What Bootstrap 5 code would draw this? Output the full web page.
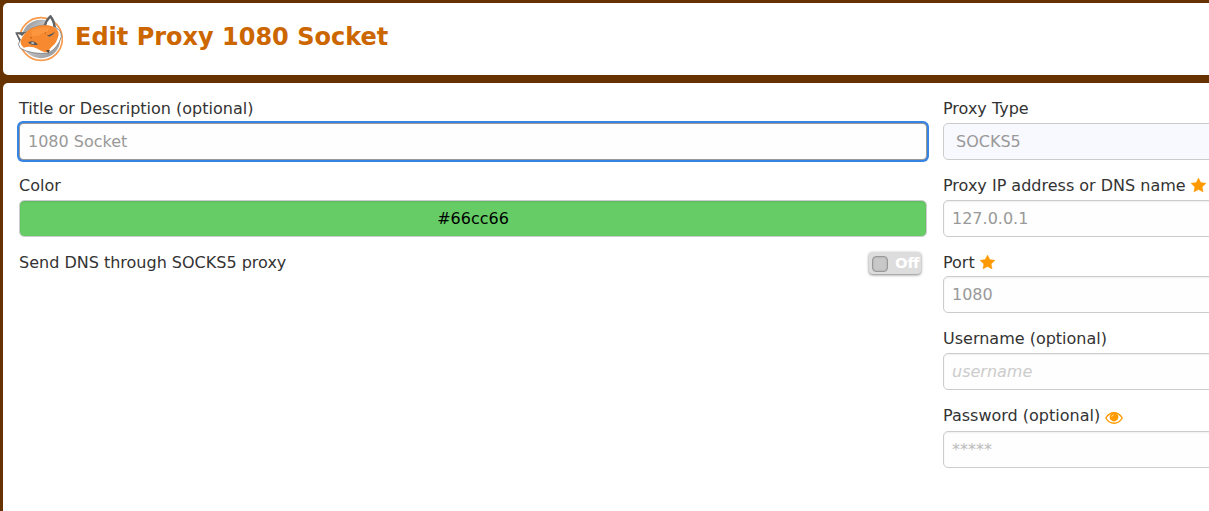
<!DOCTYPE html>
<html lang="en">
<head>
<meta charset="utf-8">
<title>Edit Proxy 1080 Socket</title>
<link href="https://cdn.jsdelivr.net/npm/bootstrap@5.3.0/dist/css/bootstrap.min.css" rel="stylesheet">
<style>
html, body { height: 100%; overflow: hidden; }
body { background: #630; color: #333; font-family: "DejaVu Sans", sans-serif; font-size: 16px; line-height: 24px; }
.page { width: 1854px; height: 100vh; padding: 3px 3px 0; gap: 8px; }
.panel { background: #fff; border-radius: 5px; }
.head-panel { height: 72px; padding: 11px 12px 13px; gap: 12px; }
.head-panel h1 { color: #c60; font-size: 24px; line-height: 28px; margin-top: -2px; }
.body-panel { border-radius: 5px 5px 0 0; padding: 14px 16px 0; gap: 16px; }
.side { width: 908px; flex: none; }
.field { height: 77px; }
.field label { display: flex; align-items: center; height: 24px; margin-bottom: 2px; gap: 5px; }
.star { margin-top: -2px; }
.eye { margin-top: 3px; }
.host-field, .port-field { height: 76.5px; }
.field .port-label { margin-bottom: 1.4px; }
.field .pass-label { margin-bottom: 3px; }
.form-control, .form-select { height: 37px; padding: 0 8px; font-size: 16px; line-height: 35px; color: #999; background-color: #fefefe; border: 1px solid #ccc; border-radius: 5px; box-shadow: inset 0 1px 2px #eee; }
.form-control::placeholder { color: #ccc; }
.form-control.secret::placeholder { color: #bbb; }
.form-control.active-field { border-color: #999; box-shadow: 0 0 0 2px #3584e4; border-radius: 4px; }
.form-select { background: #f8f8ff; padding-left: 12px; box-shadow: none; }
.form-control.color-box { background: #6c6; background-clip: padding-box; color: #000; text-align: center; box-shadow: inset 0 1px 2px rgba(0,0,0,.1); }
.dns-row { height: 24px; padding-right: 6px; }
.toggle { width: 52px; height: 22px; margin-top: 1px; background: #ddd; border-radius: 4px; box-shadow: 0 1px 3px rgba(0,0,0,.5); padding-left: 3px; gap: 7px; color: #fff; font-size: 14.8px; line-height: 22px; overflow: hidden; white-space: nowrap; }
.knob { width: 16px; height: 16px; flex: none; background: #c8c8c8; border: 1px solid #999; border-radius: 4px; box-shadow: inset 0 0 2px #999; margin-top: 1px; }
</style>
</head>
<body>
<div class="page d-flex flex-column">
  <header class="panel head-panel d-flex align-items-center">
    <svg width="48" height="48" viewBox="6 6 144 144" class="flex-shrink-0">
      <defs>
        <linearGradient id="disc" x1="0" y1="0" x2="1" y2="1"><stop offset="0" stop-color="#85878a"/><stop offset=".4" stop-color="#cbccce"/><stop offset="1" stop-color="#8d8f92"/></linearGradient>
      </defs>
      <circle cx="84" cy="81" r="64" fill="#fff" stroke="#f99a4c" stroke-width="5"/>
      <circle cx="84" cy="81" r="58" fill="url(#disc)"/>
      <!-- head and cheeks -->
      <path d="M8 62L39 61Q58 43 93 39Q100 18 113 9Q126 24 128 47Q146 56 145 74Q136 106 107 123Q58 129 22 109Q12 98 20 86Z" fill="#fff" stroke="#77797c" stroke-width="2.5" stroke-linejoin="round"/>
      <!-- face -->
      <path d="M22 89Q31 59 59 47Q91 34 118 43Q137 51 137 68Q132 92 118 103Q109 110 106 121Q91 122 73 110Q55 101 32 107Q23 99 22 89Z" fill="#f78a30"/>
      <path d="M56 54Q83 43 108 48L104 60L85 65L77 71L56 72Z" fill="#ffa04a" opacity=".55"/>
      <!-- ears -->
      <path d="M8 62L39 60L27 72Q22 66 14 67L24 84L19 88Z" fill="#5f6164"/>
      <path d="M93 40Q99 18 113 9Q126 23 128 47L121 44Q118 28 112 19Q101 30 100 40Z" fill="#5f6164"/>
      <path d="M102 39Q104 27 112 20Q119 29 120 43Q110 38 102 39Z" fill="#fff"/>
      <!-- eyes -->
      <path d="M45 92Q56 84 69 92Q77 98 72 99Q56 101 45 92Z" fill="#55575a"/>
      <ellipse cx="59" cy="93" rx="5" ry="2.5" fill="#dfe5ea"/>
      <path d="M101 70Q115 69 126 58Q121 71 109 74Z" fill="#55575a"/>
      <circle cx="54" cy="77" r="2.5" fill="#b96522"/><circle cx="97" cy="63" r="2.5" fill="#b96522"/>
      <path d="M99 114L111 115L106 124Z" fill="#444"/>
    </svg>
    <h1 class="fw-bold mb-0">Edit Proxy 1080 Socket</h1>
  </header>
  <main class="panel body-panel d-flex flex-grow-1">
    <section class="side">
      <div class="field"><label for="title">Title or Description (optional)</label><input id="title" class="form-control active-field" value="1080 Socket"></div>
      <div class="field"><label for="color">Color</label><input id="color" class="form-control color-box" value="#66cc66"></div>
      <div class="dns-row d-flex justify-content-between">
        <span>Send DNS through SOCKS5 proxy</span>
        <div class="toggle d-flex align-items-center fw-bold"><span class="knob"></span><span>Off</span></div>
      </div>
    </section>
    <section class="side">
      <div class="field"><label for="type">Proxy Type</label><select id="type" class="form-select"><option>SOCKS5</option></select></div>
      <div class="field host-field"><label for="host">Proxy IP address or DNS name
        <svg class="star" width="15" height="14" viewBox="0 0 15 14"><path fill="#f90" stroke="#f90" stroke-width=".4" d="M7.5 0L9.8 4.6L15 5.3L11.2 8.9L12.1 14L7.5 11.6L2.9 14L3.8 8.9L0 5.3L5.2 4.6Z"/></svg></label><input id="host" class="form-control" value="127.0.0.1"></div>
      <div class="field port-field"><label for="port" class="port-label">Port
        <svg class="star" width="15" height="14" viewBox="0 0 15 14"><path fill="#f90" stroke="#f90" stroke-width=".4" d="M7.5 0L9.8 4.6L15 5.3L11.2 8.9L12.1 14L7.5 11.6L2.9 14L3.8 8.9L0 5.3L5.2 4.6Z"/></svg></label><input id="port" class="form-control" value="1080"></div>
      <div class="field"><label for="user">Username (optional)</label><input id="user" class="form-control fst-italic" placeholder="username"></div>
      <div class="field"><label for="pass" class="pass-label">Password (optional)
        <svg class="eye" width="18" height="12" viewBox="0 0 18 12"><path d="M.8 6Q4 .8 9 .8T17.2 6Q14 11.2 9 11.2T.8 6Z" fill="none" stroke="#f90" stroke-width="1.4"/><circle cx="9" cy="5" r="4.4" fill="#f90"/><path d="M6.7 5Q6.7 2.8 9 2.8" fill="none" stroke="#fff" stroke-width=".5"/></svg></label><input id="pass" class="form-control secret" placeholder="*****"></div>
    </section>
  </main>
</div>
<script src="https://cdn.jsdelivr.net/npm/bootstrap@5.3.0/dist/js/bootstrap.bundle.min.js"></script>
</body>
</html>
